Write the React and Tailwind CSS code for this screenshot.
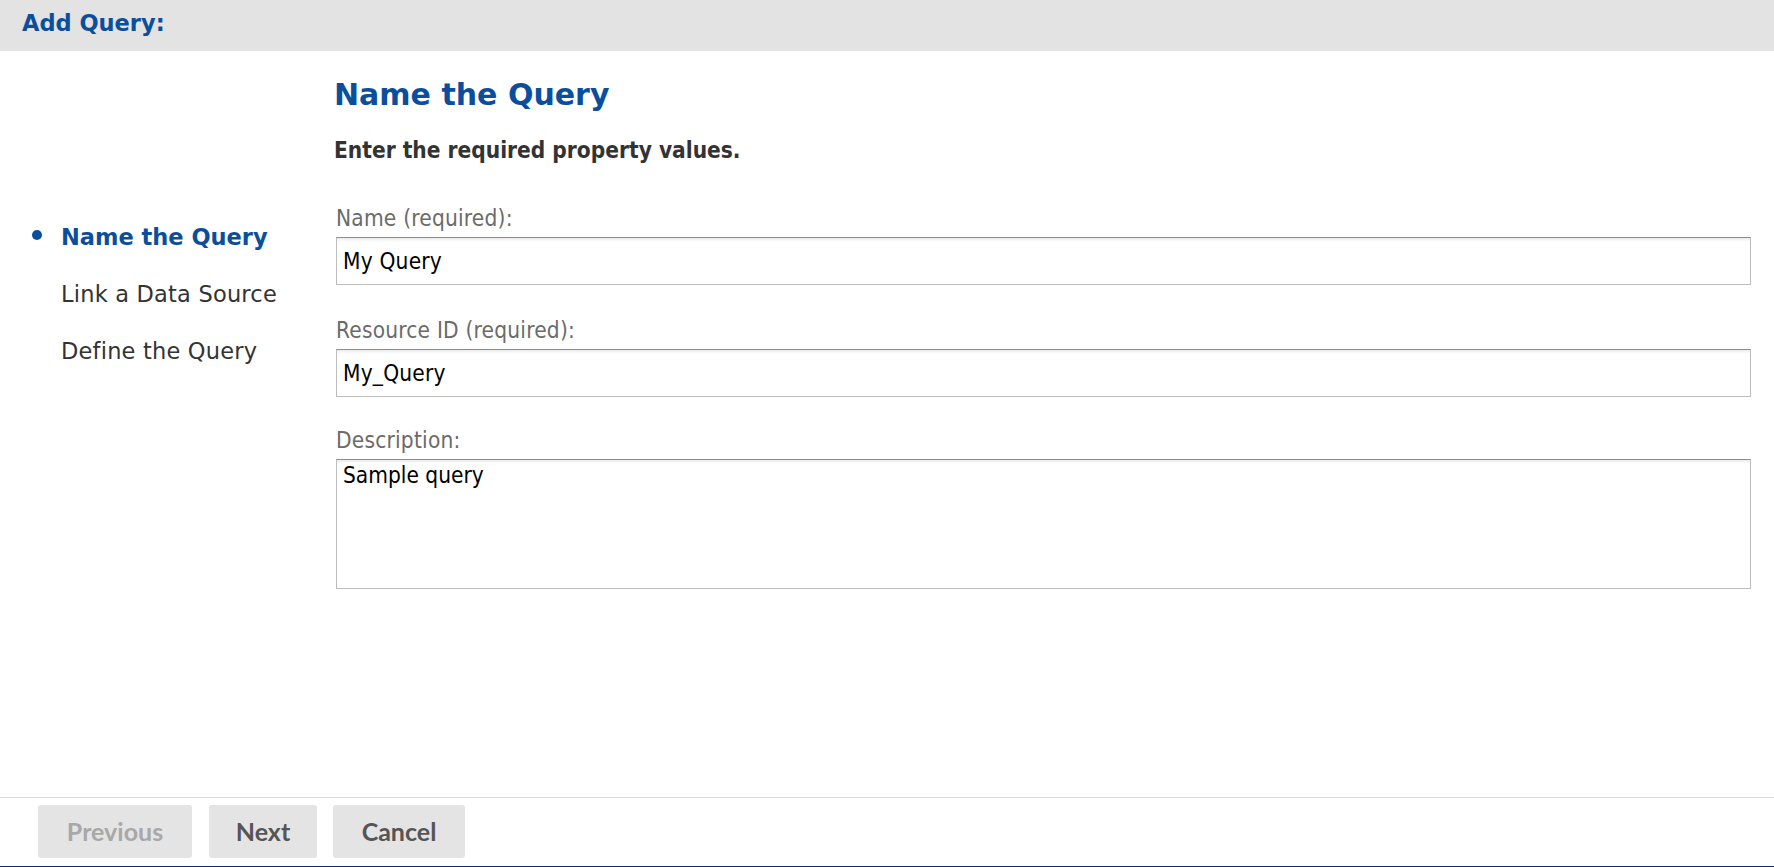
import { useState } from "react";

const steps = ["Name the Query", "Link a Data Source", "Define the Query"];

const verdana = "font-['DejaVu_Sans',Verdana,sans-serif]";
const tahoma = "font-['DejaVu_Sans_Condensed','DejaVu_Sans',sans-serif]";

function Field({ label, value, onChange, gap, area }) {
  return (
    <div className={gap}>
      <label className={`block text-[22.5px] leading-[26px] text-[#6b6b6b] tracking-[0.2px] ${tahoma}`}>
        {label}
      </label>
      {area ? (
        <textarea
          value={value}
          onChange={(e) => onChange(e.target.value)}
          className={`mt-[6px] block w-full h-[130px] resize-none border border-[#bdbdbd] border-t-[#8c8c8c] shadow-[inset_0_3px_3px_-1px_rgba(0,0,0,0.08)] px-[6px] pt-[2px] text-[22.5px] leading-[26px] text-black outline-none ${tahoma}`}
        />
      ) : (
        <input
          type="text"
          value={value}
          onChange={(e) => onChange(e.target.value)}
          className={`mt-[6px] block w-full h-[48px] border border-[#bdbdbd] border-t-[#8c8c8c] shadow-[inset_0_3px_3px_-1px_rgba(0,0,0,0.08)] px-[6px] text-[22.5px] leading-[26px] text-black tracking-[0.2px] outline-none ${tahoma}`}
        />
      )}
    </div>
  );
}

export default function App() {
  const [name, setName] = useState("My Query");
  const [resId, setResId] = useState("My_Query");
  const [desc, setDesc] = useState("Sample query");

  return (
    <div className="h-screen w-full flex flex-col bg-white overflow-hidden">
      {/* Title bar */}
      <header className="h-[51px] shrink-0 bg-[#e3e3e3] px-[22px] pt-[10px]">
        <h1 className={`text-[22.5px] leading-[26px] font-bold text-[#0b4f9c] ${verdana}`}>
          Add Query:
        </h1>
      </header>

      {/* Wizard body */}
      <main className="flex-1 flex">
        <nav className="w-[336px] shrink-0 pl-[32px] pt-[173px]">
          <ul className="flex flex-col gap-[31px]">
            {steps.map((s, i) => (
              <li key={s} className="flex items-start">
                <span className="w-[29px] shrink-0 pt-[6px]">
                  {i === 0 && (
                    <span className="block w-[10px] h-[10px] rounded-full bg-[#0b4f9c]" />
                  )}
                </span>
                <span
                  className={`text-[22.5px] leading-[26px] ${verdana} ${
                    i === 0 ? "font-bold text-[#0b4f9c]" : "text-[#333] tracking-[0.2px]"
                  }`}
                >
                  {s}
                </span>
              </li>
            ))}
          </ul>
        </nav>

        <section className="flex-1 pr-[23px] pt-[26px]">
          <h2 className={`text-[30px] leading-[35px] font-bold text-[#0b4f9c] -ml-[2px] ${verdana}`}>
            Name the Query
          </h2>
          <p className={`mt-[25px] -ml-[2px] text-[22.5px] leading-[26px] font-bold text-[#333] ${tahoma}`}>
            Enter the required property values.
          </p>
          <Field label="Name (required):" value={name} onChange={setName} gap="mt-[42px]" />
          <Field label="Resource ID (required):" value={resId} onChange={setResId} gap="mt-[32px]" />
          <Field label="Description:" value={desc} onChange={setDesc} gap="mt-[30px]" area />
        </section>
      </main>

      {/* Button bar */}
      <footer className="shrink-0 border-t border-[#d9d9d9] border-b border-b-[#0b2d6b] pt-[7px] pb-[8px] pl-[38px] flex">
        <button
          disabled
          className="w-[154px] h-[53px] rounded-[3px] bg-[#e4e4e4] text-[#a8a8a8] text-[25px] font-bold font-['Lato',sans-serif]"
        >
          Previous
        </button>
        <button className="ml-[17px] w-[108px] h-[53px] rounded-[3px] bg-[#e4e4e4] text-[#555] text-[25px] font-bold font-['Lato',sans-serif]">
          Next
        </button>
        <button className="ml-[16px] w-[132px] h-[53px] rounded-[3px] bg-[#e4e4e4] text-[#555] text-[25px] font-bold font-['Lato',sans-serif]">
          Cancel
        </button>
      </footer>
    </div>
  );
}
